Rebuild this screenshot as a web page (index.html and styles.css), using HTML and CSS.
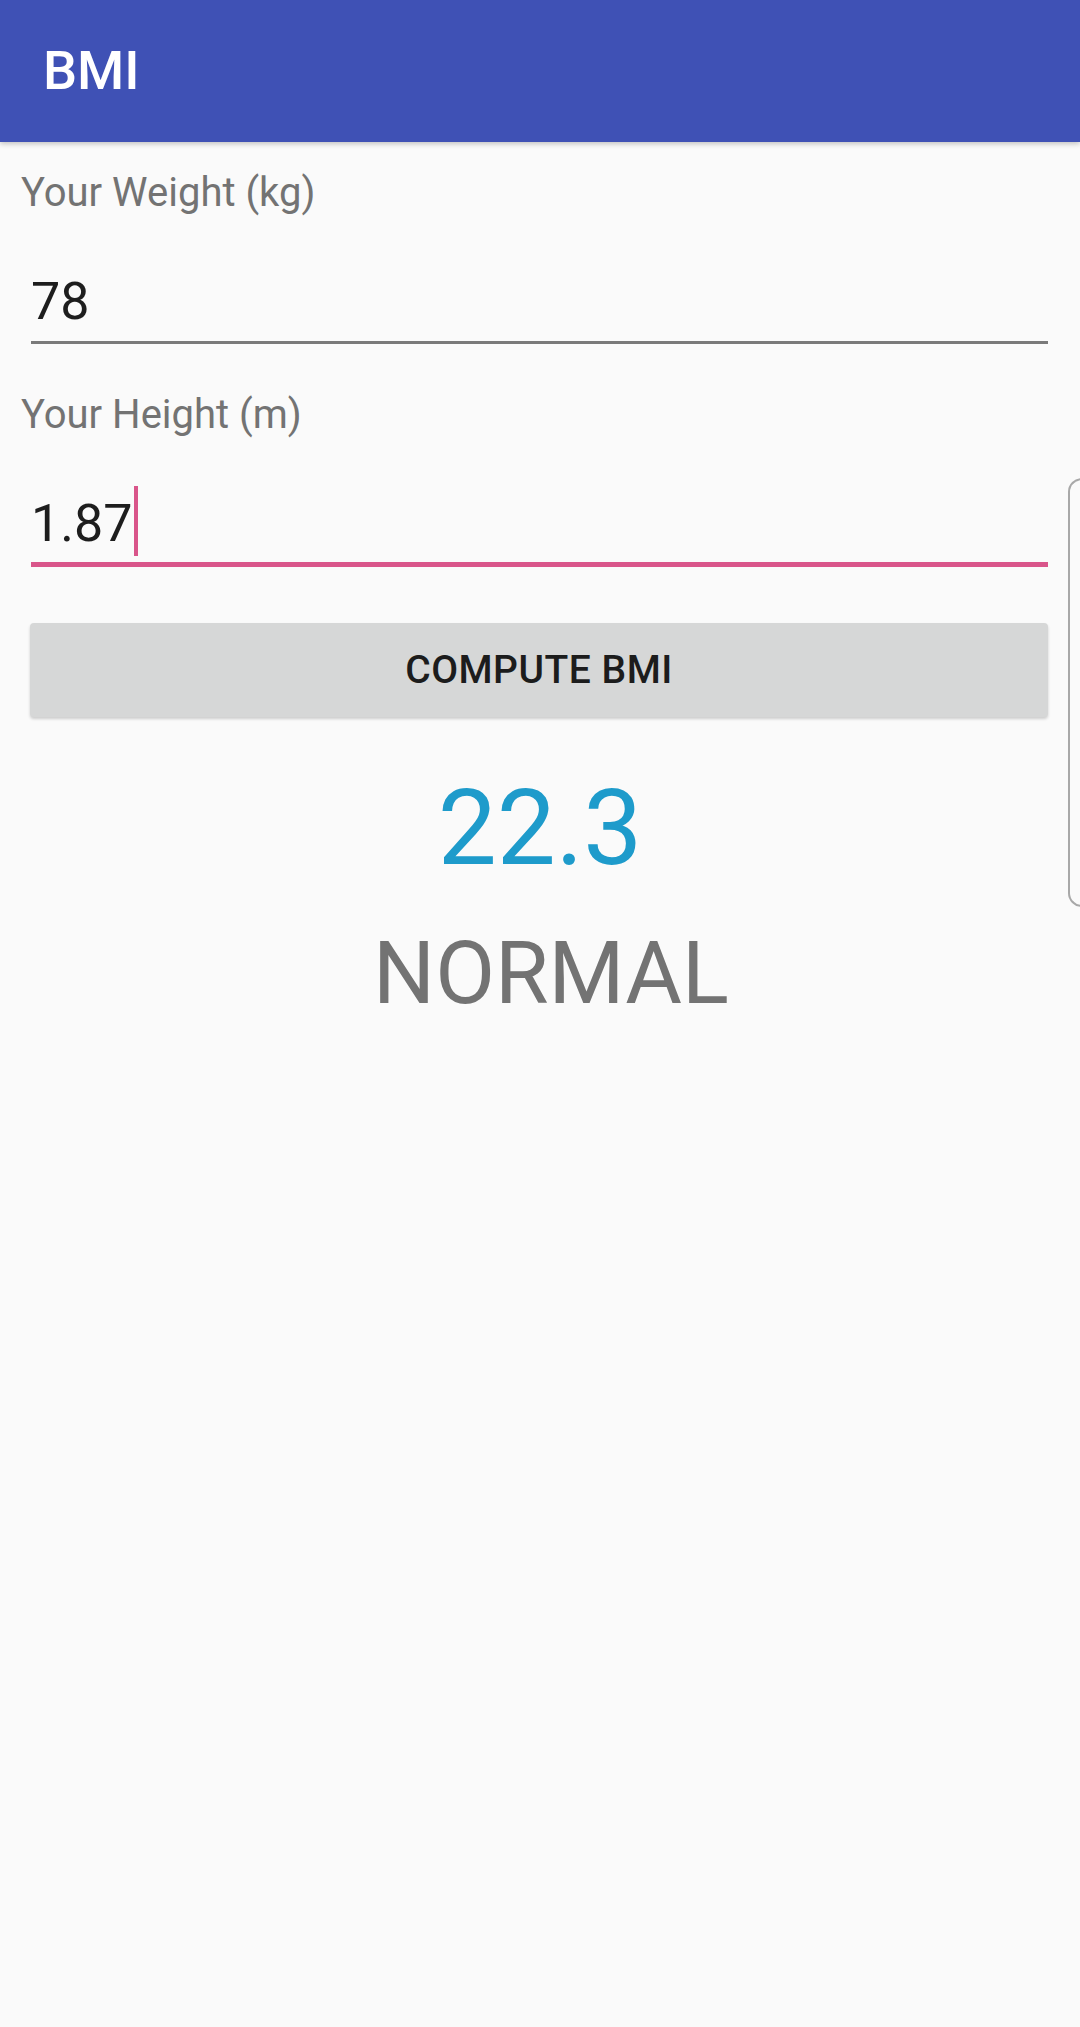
FILE: index.html
```html
<!DOCTYPE html>
<html>
<head>
<meta charset="utf-8">
<title>BMI</title>
<link rel="stylesheet" href="styles.css">
</head>
<body>
<header class="appbar"><h1 class="title">BMI</h1></header>
<main class="content">
  <label class="label label-weight">Your Weight (kg)</label>
  <div class="field field-idle">78</div>
  <label class="label label-height">Your Height (m)</label>
  <div class="field field-focus">1.87<span class="cursor"></span></div>
  <button class="btn">COMPUTE BMI</button>
  <div class="result">22.3</div>
  <div class="status">NORMAL</div>
</main>
<div class="edge-handle"></div>
</body>
</html>
```
FILE: styles.css
```css
html, body {
  margin: 0;
  padding: 0;
  background: #fafafa;
  font-family: Roboto, "Noto Sans", "Liberation Sans", sans-serif;
  width: 1080px;
  height: 2027px;
  overflow: hidden;
  position: relative;
}

.appbar {
  height: 142px;
  background: #3f51b5;
  box-shadow: 0 2px 5px rgba(0,0,0,0.22);
  display: flex;
  align-items: flex-start;
  position: relative;
  z-index: 1;
}

.title {
  margin: 0;
  padding: 39px 0 0 43px;
  color: #ffffff;
  font-size: 54px;
  line-height: 64px;
  font-weight: 500;
}

.content {
  display: flex;
  flex-direction: column;
  padding: 0 32px 0 0;
}

.label {
  display: block;
  font-size: 40px;
  line-height: 48px;
  color: #737373;
  padding-left: 21px;
}

.label-weight { margin-top: 27px; }
.label-height { margin-top: 47px; }

.field {
  margin: 54px 0 0 31px;
  font-size: 52px;
  line-height: 61px;
  color: #1d1d1d;
  padding-bottom: 9px;
}

.field-idle {
  border-bottom: 3px solid #7a7a7a;
}

.field-focus {
  border-bottom: 5px solid #d9558a;
  padding-bottom: 8px;
}

.cursor {
  display: inline-block;
  width: 4px;
  height: 70px;
  background: #d9558a;
  margin: -10px 0 -15px 2px;
  vertical-align: baseline;
}

.btn {
  margin: 56px 0 0 30px;
  height: 94px;
  border: none;
  border-radius: 4px;
  background: #d6d7d7;
  box-shadow: 0 2px 3px rgba(0,0,0,0.18);
  font-family: Roboto, "Noto Sans", sans-serif;
  font-size: 39px;
  font-weight: 500;
  letter-spacing: 0.5px;
  color: #1c1c1c;
  padding: 0;
}

.result {
  margin-top: 50px;
  text-align: center;
  padding-left: 32px;
  font-size: 105px;
  line-height: 123px;
  color: #1e9bcb;
}

.status {
  margin-top: 32px;
  text-align: center;
  padding-left: 54px;
  font-size: 87px;
  line-height: 102px;
  color: #737373;
}

.edge-handle {
  position: absolute;
  right: -2px;
  top: 478px;
  width: 12px;
  height: 425px;
  border: 2px solid #a8a8a8;
  border-right: none;
  border-radius: 14px 0 0 14px;
}
```
